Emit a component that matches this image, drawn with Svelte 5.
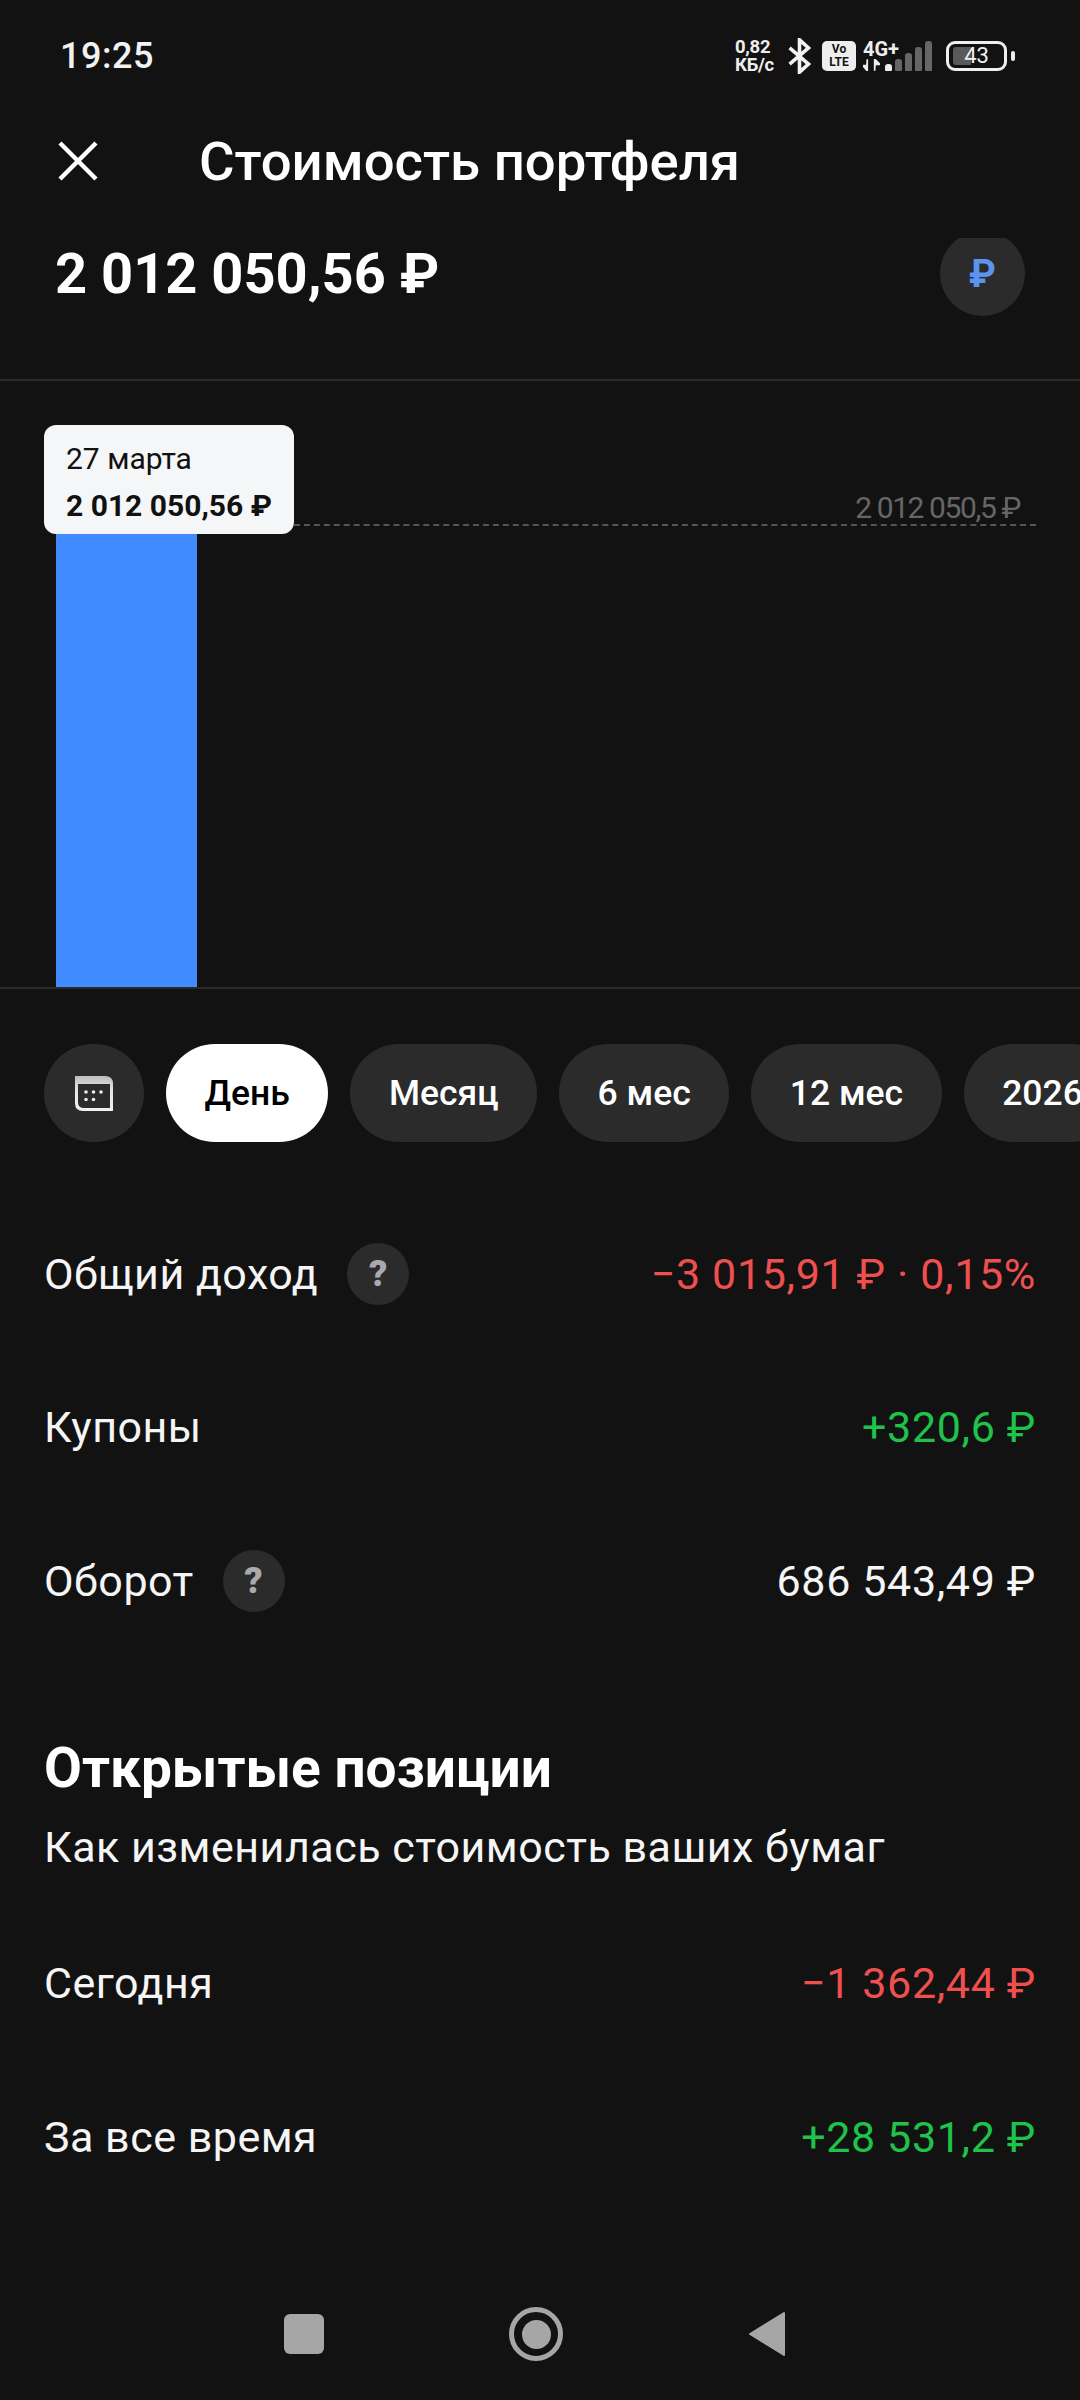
<script lang="ts">
    const chips = ['День', 'Месяц', '6 мес', '12 мес', '2026'];
    const totals = [
        { label: 'Общий доход', value: '−3 015,91 ₽ · 0,15%', tone: 'down', help: true },
        { label: 'Купоны', value: '+320,6 ₽', tone: 'up', help: false },
        { label: 'Оборот', value: '686 543,49 ₽', tone: '', help: true }
    ];
    const positions = [
        { label: 'Сегодня', value: '−1 362,44 ₽', tone: 'down' },
        { label: 'За все время', value: '+28 531,2 ₽', tone: 'up' }
    ];
    const signal = [7, 12, 18, 24, 30];
</script>

<div class="screen">
    <div class="status">
        <span class="time">19:25</span>
        <div class="status-icons">
            <span class="speed">0,82<br />КБ/с</span>
            <svg class="bt" width="25" height="36" viewBox="0 0 26 40">
                <path d="M2 11 L23 29 L13 38 V2 L23 11 L2 29" fill="none" stroke="#f2f2f2" stroke-width="4" />
            </svg>
            <span class="volte">Vo<br />LTE</span>
            <div class="net">
                <span class="net-type">4G+</span>
                <span class="arrows">
                    <svg width="17" height="12" viewBox="0 0 16 11">
                        <path d="M4 0 V11 L0 6 H3 M11 11 V0 L16 5 H12" fill="#eee" stroke="#eee" stroke-width="1.6" />
                    </svg>
                </span>
            </div>
            <div class="signal">
                {#each signal as h, i}
                    <span class="sig-bar" class:on={i === 0} style="height: {h}px"></span>
                {/each}
            </div>
            <div class="battery">
                <div class="cell">
                    <span class="level"></span>
                    <span class="pct">43</span>
                </div>
                <span class="nub"></span>
            </div>
        </div>
    </div>

    <header class="top">
        <svg width="42" height="42" viewBox="0 0 42 42">
            <path d="M3 3 L39 39 M39 3 L3 39" stroke="#fff" stroke-width="4.4" fill="none" />
        </svg>
        <h1>Стоимость портфеля</h1>
    </header>

    <div class="amount-row">
        <span class="amount">2 012 050,56 ₽</span>
        <span class="currency">₽</span>
    </div>

    <section class="chart">
        <div class="guide">
            <span class="guide-label">2 012 050,5 ₽</span>
        </div>
        <div class="bar"></div>
        <div class="tip">
            <span class="tip-date">27 марта</span>
            <span class="tip-value">2 012 050,56 ₽</span>
        </div>
    </section>

    <nav class="chips">
        <span class="chip cal">
            <svg width="38" height="35" viewBox="0 0 38 35">
                <defs>
                    <linearGradient id="calTop" x1="0" y1="0" x2="0" y2="1">
                        <stop offset="0" stop-color="#bdbdbd" />
                        <stop offset="0.4" stop-color="#e4e4e4" />
                        <stop offset="1" stop-color="#f2f2f2" />
                    </linearGradient>
                </defs>
                <path d="M0 0 H30 Q38 0 38 8 V35 H8 Q0 35 0 27 Z" fill="url(#calTop)" />
                <path d="M3 8 H35 V32 H9 Q3 32 3 26 Z" fill="#2b2b2b" />
                <g fill="#ececec">
                    <circle cx="11" cy="16" r="1.8" />
                    <circle cx="18.5" cy="16" r="1.8" />
                    <circle cx="26" cy="16" r="1.8" />
                    <circle cx="11" cy="23.5" r="1.8" />
                    <circle cx="18.5" cy="23.5" r="1.8" />
                </g>
            </svg>
        </span>
        {#each chips as chip, i}
            <span class="chip" class:active={i === 0}>{chip}</span>
        {/each}
    </nav>

    <section class="rows">
        {#each totals as row}
            <div class="row">
                <span class="label">{row.label}</span>
                {#if row.help}<span class="help">?</span>{/if}
                <span class="value {row.tone}">{row.value}</span>
            </div>
        {/each}
    </section>

    <section class="open">
        <h2>Открытые позиции</h2>
        <p>Как изменилась стоимость ваших бумаг</p>
        {#each positions as row}
            <div class="row">
                <span class="label">{row.label}</span>
                <span class="value {row.tone}">{row.value}</span>
            </div>
        {/each}
    </section>

    <footer class="navbar">
        <span class="nav-square"></span>
        <span class="nav-home"><span></span></span>
        <svg width="38" height="46" viewBox="0 0 38 46">
            <path d="M36 2 V44 L2 23 Z" fill="#a6a6a6" stroke="#a6a6a6" stroke-width="2" stroke-linejoin="round" />
        </svg>
    </footer>
</div>

<style>
    :global(body) {
        margin: 0;
        background: #121212;
    }

    .screen {
        width: 1080px;
        height: 2400px;
        overflow: hidden;
        background: #121212;
        color: #fff;
        font-family: Roboto, "Noto Sans", sans-serif;
        display: flex;
        flex-direction: column;
    }

    .status {
        height: 112px;
        flex-shrink: 0;
        display: flex;
        align-items: center;
        justify-content: space-between;
        padding: 0 65px 0 60px;
    }

    .time {
        font-size: 36px;
        font-weight: 500;
        color: #f2f2f2;
        letter-spacing: 0.5px;
    }

    .status-icons {
        display: flex;
        align-items: center;
    }

    .speed {
        font-size: 18.5px;
        font-weight: 700;
        line-height: 18px;
        letter-spacing: -0.3px;
        color: #eee;
        width: 41px;
    }

    .bt {
        margin-left: 11px;
    }

    .volte {
        margin-left: 10px;
        width: 34px;
        height: 30px;
        border-radius: 5px;
        background: #eee;
        color: #121212;
        font-size: 12px;
        font-weight: 700;
        line-height: 13px;
        text-align: center;
        padding-top: 2px;
        box-sizing: border-box;
    }

    .net {
        margin-left: 7px;
        width: 36px;
        display: flex;
        flex-direction: column;
        gap: 2px;
    }

    .net-type {
        font-size: 20px;
        font-weight: 700;
        line-height: 16px;
        color: #eee;
    }

    .arrows {
        display: flex;
        height: 12px;
    }

    .signal {
        display: flex;
        align-items: flex-end;
        gap: 3px;
        height: 30px;
        margin-left: -14px;
    }

    .sig-bar {
        width: 7px;
        border-radius: 3px 3px 1px 1px;
        background: #666;
    }

    .sig-bar.on {
        background: #eee;
    }

    .battery {
        margin-left: 14px;
        display: flex;
        align-items: center;
        gap: 4px;
    }

    .cell {
        position: relative;
        width: 61px;
        height: 30px;
        box-sizing: border-box;
        border: 3px solid #eee;
        border-radius: 9px;
    }

    .level {
        position: absolute;
        left: 4px;
        top: 3px;
        bottom: 3px;
        width: 18px;
        border-radius: 3px 0 0 3px;
        background: #5a5a5a;
    }

    .pct {
        position: absolute;
        inset: 0;
        text-align: center;
        font-size: 22px;
        line-height: 24px;
        color: #f2f2f2;
    }

    .nub {
        width: 4px;
        height: 10px;
        border-radius: 2px;
        background: #eee;
    }

    .top {
        height: 98px;
        flex-shrink: 0;
        display: flex;
        align-items: center;
        padding-left: 57px;
        gap: 100px;
    }

    h1 {
        margin: 0;
        font-size: 54.5px;
        font-weight: 500;
        color: #fff;
    }

    .amount-row {
        height: 171px;
        flex-shrink: 0;
        box-sizing: border-box;
        padding: 0 55px 0 55px;
        display: flex;
        justify-content: space-between;
        align-items: flex-start;
        border-bottom: 2px solid #2a2a2a;
    }

    .amount {
        font-size: 56px;
        font-weight: 700;
        line-height: 62px;
        margin-top: 33px;
    }

    .currency {
        width: 85px;
        height: 85px;
        margin-top: 21px;
        border-radius: 50%;
        background: #2b2b2b;
        color: #5b93ee;
        font-size: 38px;
        font-weight: 700;
        display: flex;
        align-items: center;
        justify-content: center;
        clip-path: inset(7px 0 0 0);
    }

    .chart {
        position: relative;
        height: 606px;
        flex-shrink: 0;
        border-bottom: 2px solid #2a2a2a;
        display: flex;
        align-items: flex-end;
        padding-left: 56px;
    }

    .bar {
        width: 141px;
        height: 464px;
        background: #3f8bff;
    }

    .guide {
        position: absolute;
        left: 294px;
        right: 44px;
        top: 143px;
        border-top: 2px dashed #555;
    }

    .guide-label {
        position: absolute;
        right: 16px;
        bottom: 1px;
        font-size: 30px;
        letter-spacing: -1.4px;
        white-space: nowrap;
        color: #666;
    }

    .tip {
        position: absolute;
        left: 44px;
        top: 44px;
        width: 250px;
        height: 109px;
        box-sizing: border-box;
        padding: 17px 0 0 22px;
        border-radius: 12px;
        background: #f5f6f8;
        color: #111;
        display: flex;
        flex-direction: column;
        gap: 14px;
    }

    .tip-date {
        font-size: 30px;
        line-height: 33px;
    }

    .tip-value {
        font-size: 30px;
        font-weight: 700;
        line-height: 34px;
    }

    .chips {
        flex-shrink: 0;
        display: flex;
        gap: 22px;
        padding: 55px 0 0 44px;
        white-space: nowrap;
    }

    .chip {
        height: 98px;
        padding: 0 38.5px;
        flex-shrink: 0;
        border-radius: 49px;
        background: #2b2b2b;
        font-size: 35.5px;
        font-weight: 500;
        display: flex;
        align-items: center;
        justify-content: center;
    }

    .chip.active {
        background: #fff;
        color: #000;
    }

    .chip.cal {
        width: 100px;
        padding: 0;
        box-sizing: border-box;
    }

    .rows {
        flex-shrink: 0;
        padding: 55px 44px 0;
        display: flex;
        flex-direction: column;
    }

    .row {
        height: 153.5px;
        flex-shrink: 0;
        display: flex;
        align-items: center;
        font-size: 43px;
        letter-spacing: 0.5px;
    }

    .label {
        color: #f5f5f5;
    }

    .help {
        width: 62px;
        height: 62px;
        margin-left: 29px;
        border-radius: 50%;
        background: #2b2b2b;
        color: #a9a9ae;
        font-size: 36px;
        font-weight: 900;
        display: flex;
        align-items: center;
        justify-content: center;
    }

    .value {
        margin-left: auto;
        color: #f5f5f5;
        letter-spacing: 0.65px;
    }

    .value.down {
        color: #ee5050;
    }

    .value.up {
        color: #1fc24a;
    }

    .open {
        flex-shrink: 0;
        padding: 80px 44px 0;
    }

    h2 {
        margin: 0;
        font-size: 55px;
        font-weight: 700;
        line-height: 60px;
    }

    p {
        margin: 25px 0 36px;
        font-size: 43px;
        line-height: 48px;
        letter-spacing: 0.5px;
        color: #f5f5f5;
    }

    .navbar {
        margin-top: auto;
        height: 132px;
        flex-shrink: 0;
        box-sizing: border-box;
        display: flex;
        align-items: center;
        padding-left: 284px;
        gap: 185px;
    }

    .nav-square {
        width: 40px;
        height: 40px;
        border-radius: 6px;
        background: #a6a6a6;
    }

    .nav-home {
        width: 54px;
        height: 54px;
        box-sizing: border-box;
        border: 5px solid #a6a6a6;
        border-radius: 50%;
        display: flex;
        align-items: center;
        justify-content: center;
    }

    .nav-home span {
        width: 29px;
        height: 29px;
        border-radius: 50%;
        background: #a6a6a6;
    }
</style>
